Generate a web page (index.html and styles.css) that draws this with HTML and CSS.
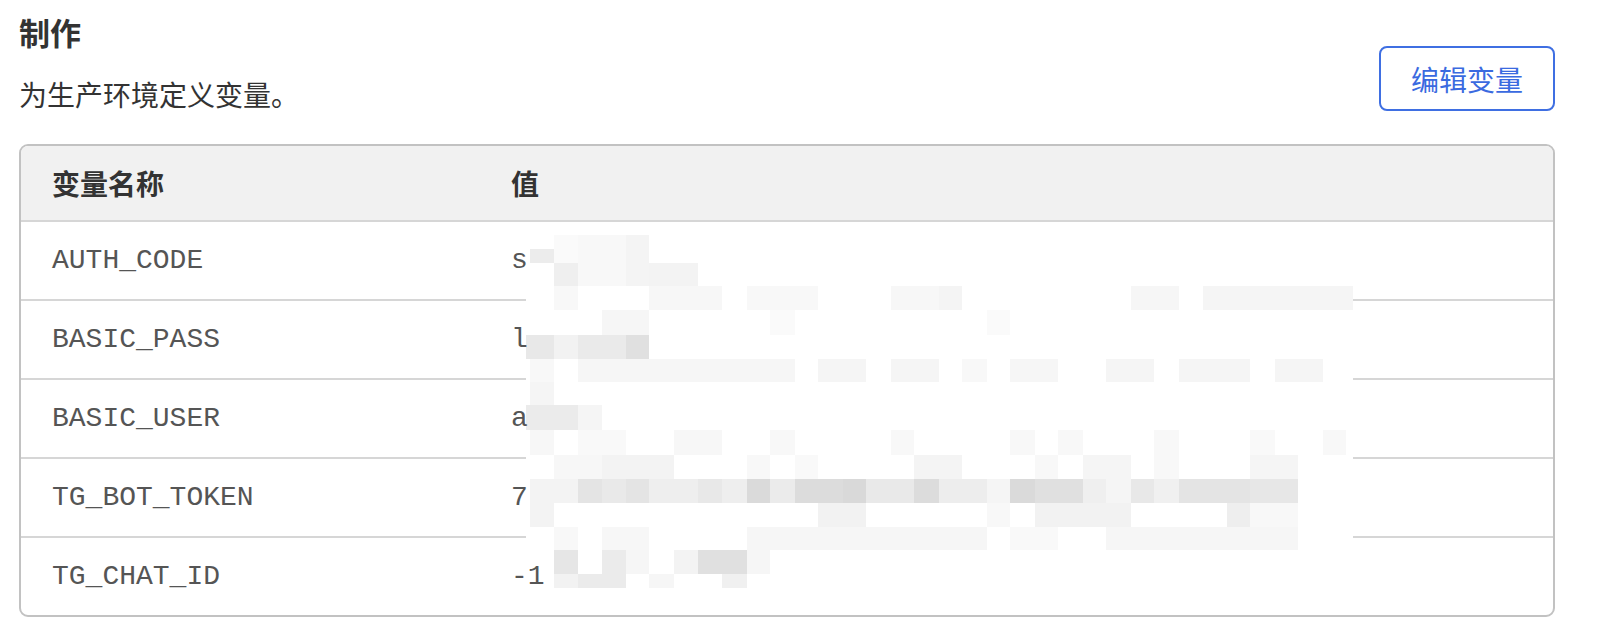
FILE: index.html
```html
<!DOCTYPE html>
<html lang="zh-CN">
<head>
<meta charset="utf-8">
<title>制作</title>
<link rel="stylesheet" href="styles.css">
</head>
<body>
<div class="page">
  <div class="top">
    <div class="intro">
      <h2 class="title">制作</h2>
      <p class="subtitle">为生产环境定义变量。</p>
    </div>
    <button class="edit-btn" type="button">编辑变量</button>
  </div>
  <div class="table-wrap">
    <table class="vars">
      <colgroup><col class="col-name"><col class="col-value"></colgroup>
      <thead>
        <tr><th>变量名称</th><th>值</th></tr>
      </thead>
      <tbody>
        <tr><td class="name">AUTH_CODE</td><td class="value"><span class="val">s</span></td></tr>
        <tr><td class="name">BASIC_PASS</td><td class="value"><span class="val">l</span></td></tr>
        <tr><td class="name">BASIC_USER</td><td class="value"><span class="val">a</span></td></tr>
        <tr><td class="name">TG_BOT_TOKEN</td><td class="value"><span class="val">7</span></td></tr>
        <tr><td class="name">TG_CHAT_ID</td><td class="value"><span class="val">-1</span></td></tr>
      </tbody>
    </table>
    <div class="mosaic" aria-hidden="true"></div>
  </div>
</div>
</body>
</html>
```

FILE: styles.css
```css
html, body {
  margin: 0;
  padding: 0;
  background: #ffffff;
}

body {
  font-family: "Noto Sans CJK SC", "Noto Sans", sans-serif;
  color: #333333;
}

.page {
  padding: 12px 46px 0 19px;
}

.top {
  display: flex;
  justify-content: space-between;
  align-items: flex-start;
}

.title {
  margin: 0;
  font-size: 31px;
  line-height: 40px;
  font-weight: 700;
  color: #333333;
}

.subtitle {
  margin: 22px 0 0 0;
  font-size: 28px;
  line-height: 40px;
  color: #333333;
}

.edit-btn {
  margin-top: 34px;
  width: 176px;
  height: 65px;
  box-sizing: border-box;
  border: 2px solid #3f6fe2;
  border-radius: 8px;
  background: #ffffff;
  color: #3a6ae0;
  font-family: "Noto Sans CJK SC", sans-serif;
  font-size: 28px;
  display: flex;
  align-items: center;
  justify-content: center;
  padding: 0;
}

.table-wrap {
  position: relative;
  margin-top: 30px;
  border: 2px solid #c2c2c2;
  border-radius: 9px;
  overflow: hidden;
}

.vars {
  width: 100%;
  border-collapse: collapse;
  table-layout: fixed;
}

.col-name {
  width: 459px;
}

.vars th {
  background: #f1f1f1;
  height: 75px;
  padding: 0 31px;
  text-align: left;
  font-size: 28px;
  font-weight: 700;
  color: #333333;
  border-bottom: 2px solid #d6d6d6;
  box-sizing: border-box;
}

.vars td {
  height: 77px;
  padding: 0 31px;
  font-family: "Liberation Mono", "DejaVu Sans Mono", monospace;
  font-size: 28px;
  color: #555555;
  border-bottom: 2px solid #d6d6d6;
}

.vars tbody tr:last-child td {
  border-bottom: none;
}

.val {
  position: relative;
  z-index: 2;
}

.mosaic {
  position: absolute;
  left: 505px;
  top: 89px;
  width: 827px;
  height: 354px;
  z-index: 1;
  background:
    linear-gradient(#ececec,#ececec) 4px 14px / 24px 14px no-repeat,
    linear-gradient(#efefef,#efefef) 28px 28px / 24px 23px no-repeat,
    linear-gradient(#fafafa,#fafafa) 28px 0 / 24px 28px no-repeat,
    linear-gradient(#f8f8f8,#f8f8f8) 52px 0 / 48px 51px no-repeat,
    linear-gradient(#f4f4f4,#f4f4f4) 100px 0 / 23px 51px no-repeat,
    linear-gradient(#f3f3f3,#f3f3f3) 123px 28px / 49px 23px no-repeat,
    linear-gradient(#f8f8f8,#f8f8f8) 28px 51px / 24px 24px no-repeat,
    linear-gradient(#f7f7f7,#f7f7f7) 123px 51px / 73px 24px no-repeat,
    linear-gradient(#f8f8f8,#f8f8f8) 221px 51px / 71px 24px no-repeat,
    linear-gradient(#f4f4f4,#f4f4f4) 413px 51px / 23px 24px no-repeat,
    linear-gradient(#f7f7f7,#f7f7f7) 365px 51px / 48px 24px no-repeat,
    linear-gradient(#f6f6f6,#f6f6f6) 605px 51px / 48px 24px no-repeat,
    linear-gradient(#f5f5f5,#f5f5f5) 677px 51px / 150px 24px no-repeat,
    linear-gradient(#f6f6f6,#f6f6f6) 76px 75px / 47px 25px no-repeat,
    linear-gradient(#fafafa,#fafafa) 244px 75px / 25px 25px no-repeat,
    linear-gradient(#fafafa,#fafafa) 461px 75px / 23px 25px no-repeat,
    linear-gradient(#e8e8e8,#e8e8e8) 0 100px / 28px 24px no-repeat,
    linear-gradient(#f2f2f2,#f2f2f2) 28px 100px / 24px 24px no-repeat,
    linear-gradient(#eaeaea,#eaeaea) 52px 100px / 48px 24px no-repeat,
    linear-gradient(#e0e0e0,#e0e0e0) 100px 100px / 23px 24px no-repeat,
    linear-gradient(#f8f8f8,#f8f8f8) 4px 124px / 24px 23px no-repeat,
    linear-gradient(#f6f6f6,#f6f6f6) 52px 124px / 217px 23px no-repeat,
    linear-gradient(#f5f5f5,#f5f5f5) 292px 124px / 48px 23px no-repeat,
    linear-gradient(#f5f5f5,#f5f5f5) 365px 124px / 48px 23px no-repeat,
    linear-gradient(#f8f8f8,#f8f8f8) 436px 124px / 25px 23px no-repeat,
    linear-gradient(#f6f6f6,#f6f6f6) 484px 124px / 48px 23px no-repeat,
    linear-gradient(#f5f5f5,#f5f5f5) 580px 124px / 48px 23px no-repeat,
    linear-gradient(#f5f5f5,#f5f5f5) 653px 124px / 71px 23px no-repeat,
    linear-gradient(#f5f5f5,#f5f5f5) 749px 124px / 48px 23px no-repeat,
    linear-gradient(#f5f5f5,#f5f5f5) 4px 147px / 24px 23px no-repeat,
    linear-gradient(#ebebeb,#ebebeb) 0 170px / 52px 25px no-repeat,
    linear-gradient(#f5f5f5,#f5f5f5) 52px 170px / 24px 25px no-repeat,
    linear-gradient(#f7f7f7,#f7f7f7) 4px 195px / 24px 25px no-repeat,
    linear-gradient(#f9f9f9,#f9f9f9) 52px 195px / 48px 25px no-repeat,
    linear-gradient(#f7f7f7,#f7f7f7) 148px 195px / 48px 25px no-repeat,
    linear-gradient(#f8f8f8,#f8f8f8) 244px 195px / 25px 25px no-repeat,
    linear-gradient(#f8f8f8,#f8f8f8) 365px 195px / 23px 25px no-repeat,
    linear-gradient(#f8f8f8,#f8f8f8) 484px 195px / 25px 25px no-repeat,
    linear-gradient(#f8f8f8,#f8f8f8) 532px 195px / 25px 25px no-repeat,
    linear-gradient(#f8f8f8,#f8f8f8) 628px 195px / 25px 25px no-repeat,
    linear-gradient(#f9f9f9,#f9f9f9) 724px 195px / 25px 25px no-repeat,
    linear-gradient(#f8f8f8,#f8f8f8) 797px 195px / 23px 25px no-repeat,
    linear-gradient(#f7f7f7,#f7f7f7) 28px 220px / 48px 24px no-repeat,
    linear-gradient(#f3f3f3,#f3f3f3) 76px 220px / 72px 24px no-repeat,
    linear-gradient(#f8f8f8,#f8f8f8) 221px 220px / 23px 24px no-repeat,
    linear-gradient(#f9f9f9,#f9f9f9) 269px 220px / 23px 24px no-repeat,
    linear-gradient(#f4f4f4,#f4f4f4) 388px 220px / 48px 24px no-repeat,
    linear-gradient(#f8f8f8,#f8f8f8) 509px 220px / 23px 24px no-repeat,
    linear-gradient(#f5f5f5,#f5f5f5) 557px 220px / 48px 24px no-repeat,
    linear-gradient(#f8f8f8,#f8f8f8) 628px 220px / 25px 24px no-repeat,
    linear-gradient(#f5f5f5,#f5f5f5) 724px 220px / 48px 24px no-repeat,
    linear-gradient(#f3f3f3,#f3f3f3) 4px 244px / 48px 24px no-repeat,
    linear-gradient(#e4e4e4,#e4e4e4) 52px 244px / 24px 24px no-repeat,
    linear-gradient(#e9e9e9,#e9e9e9) 76px 244px / 24px 24px no-repeat,
    linear-gradient(#e4e4e4,#e4e4e4) 100px 244px / 23px 24px no-repeat,
    linear-gradient(#eeeeee,#eeeeee) 123px 244px / 49px 24px no-repeat,
    linear-gradient(#e8e8e8,#e8e8e8) 172px 244px / 24px 24px no-repeat,
    linear-gradient(#eeeeee,#eeeeee) 196px 244px / 25px 24px no-repeat,
    linear-gradient(#dadada,#dadada) 221px 244px / 23px 24px no-repeat,
    linear-gradient(#ebebeb,#ebebeb) 244px 244px / 25px 24px no-repeat,
    linear-gradient(#dcdcdc,#dcdcdc) 269px 244px / 48px 24px no-repeat,
    linear-gradient(#d9d9d9,#d9d9d9) 317px 244px / 23px 24px no-repeat,
    linear-gradient(#e9e9e9,#e9e9e9) 340px 244px / 48px 24px no-repeat,
    linear-gradient(#dcdcdc,#dcdcdc) 388px 244px / 25px 24px no-repeat,
    linear-gradient(#ededed,#ededed) 413px 244px / 48px 24px no-repeat,
    linear-gradient(#f5f5f5,#f5f5f5) 461px 244px / 23px 24px no-repeat,
    linear-gradient(#dadada,#dadada) 484px 244px / 25px 24px no-repeat,
    linear-gradient(#e0e0e0,#e0e0e0) 509px 244px / 48px 24px no-repeat,
    linear-gradient(#efefef,#efefef) 557px 244px / 23px 24px no-repeat,
    linear-gradient(#f5f5f5,#f5f5f5) 580px 244px / 25px 24px no-repeat,
    linear-gradient(#e8e8e8,#e8e8e8) 605px 244px / 23px 24px no-repeat,
    linear-gradient(#f0f0f0,#f0f0f0) 628px 244px / 25px 24px no-repeat,
    linear-gradient(#e4e4e4,#e4e4e4) 653px 244px / 71px 24px no-repeat,
    linear-gradient(#e7e7e7,#e7e7e7) 724px 244px / 48px 24px no-repeat,
    linear-gradient(#f3f3f3,#f3f3f3) 4px 268px / 24px 24px no-repeat,
    linear-gradient(#f2f2f2,#f2f2f2) 292px 268px / 48px 24px no-repeat,
    linear-gradient(#f8f8f8,#f8f8f8) 461px 268px / 23px 24px no-repeat,
    linear-gradient(#f2f2f2,#f2f2f2) 509px 268px / 96px 24px no-repeat,
    linear-gradient(#eeeeee,#eeeeee) 701px 268px / 23px 24px no-repeat,
    linear-gradient(#f8f8f8,#f8f8f8) 724px 268px / 48px 24px no-repeat,
    linear-gradient(#f8f8f8,#f8f8f8) 28px 292px / 24px 23px no-repeat,
    linear-gradient(#f7f7f7,#f7f7f7) 76px 292px / 47px 23px no-repeat,
    linear-gradient(#f6f6f6,#f6f6f6) 221px 292px / 240px 23px no-repeat,
    linear-gradient(#f9f9f9,#f9f9f9) 484px 292px / 48px 23px no-repeat,
    linear-gradient(#f6f6f6,#f6f6f6) 580px 292px / 192px 23px no-repeat,
    linear-gradient(#e6e6e6,#e6e6e6) 28px 315px / 24px 24px no-repeat,
    linear-gradient(#ebebeb,#ebebeb) 76px 315px / 24px 24px no-repeat,
    linear-gradient(#f6f6f6,#f6f6f6) 100px 315px / 23px 24px no-repeat,
    linear-gradient(#f3f3f3,#f3f3f3) 148px 315px / 24px 24px no-repeat,
    linear-gradient(#e0e0e0,#e0e0e0) 172px 315px / 49px 24px no-repeat,
    linear-gradient(#f6f6f6,#f6f6f6) 221px 315px / 23px 24px no-repeat,
    linear-gradient(#f2f2f2,#f2f2f2) 28px 339px / 24px 14px no-repeat,
    linear-gradient(#ebebeb,#ebebeb) 52px 339px / 48px 14px no-repeat,
    linear-gradient(#f6f6f6,#f6f6f6) 123px 339px / 25px 14px no-repeat,
    linear-gradient(#f0f0f0,#f0f0f0) 196px 339px / 25px 14px no-repeat,
    #ffffff;
}
```
